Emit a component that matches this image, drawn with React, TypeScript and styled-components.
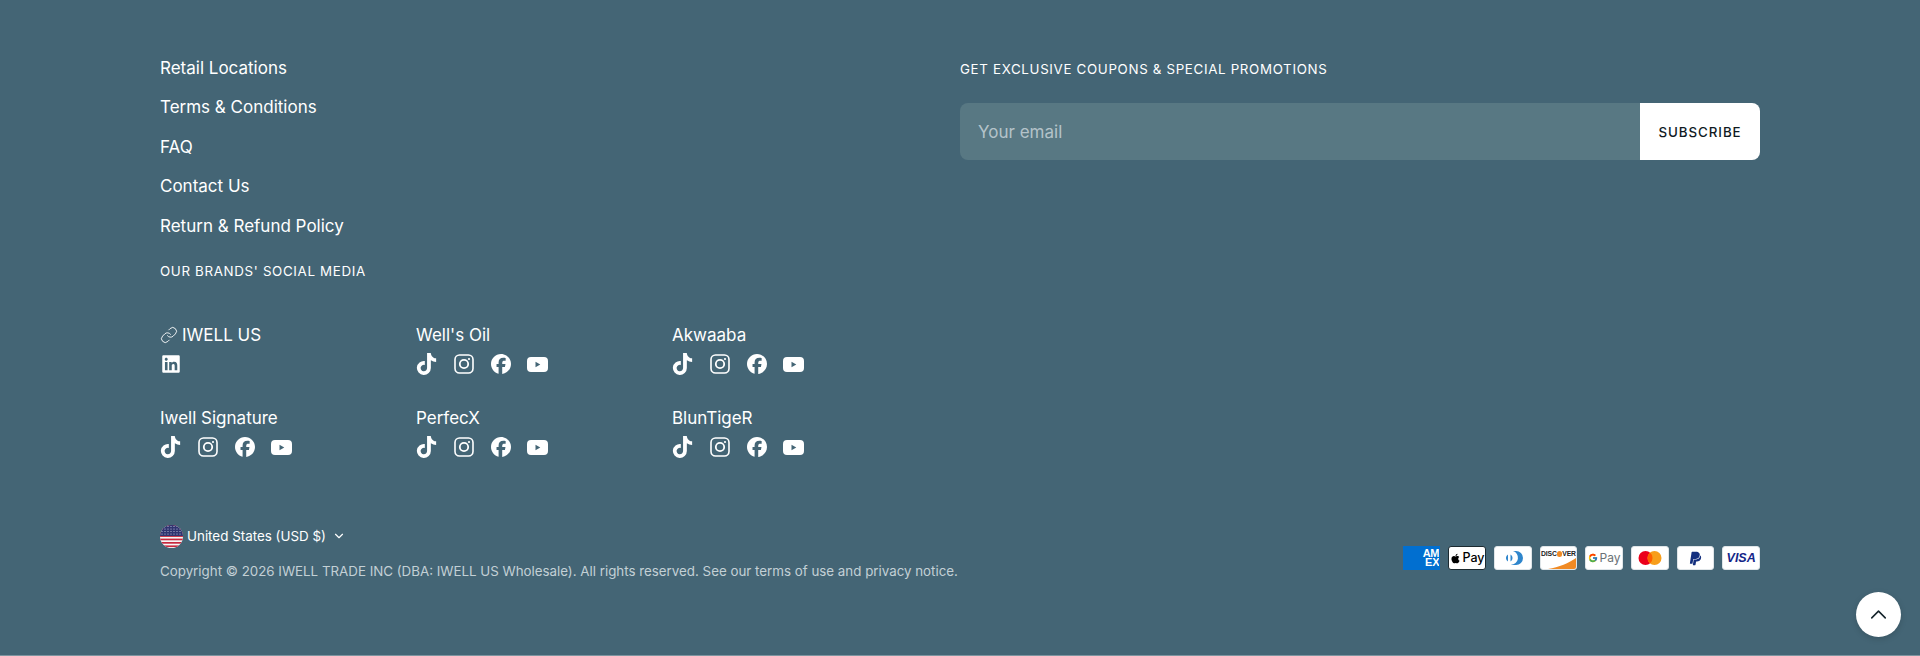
import styled, { createGlobalStyle } from 'styled-components';
import { FaApple, FaFacebook, FaLinkedin, FaPaypal, FaTiktok } from 'react-icons/fa6';
import { FcGoogle } from 'react-icons/fc';
import { ChevronDown, ChevronUp, Link } from 'lucide-react';

const GlobalStyle = createGlobalStyle`
  html, body { margin: 0; padding: 0; background: #446575; }
  body { font-family: Inter, "Liberation Sans", sans-serif; }
  * { box-sizing: border-box; }
`;

const Footer = styled.footer`
  position: relative;
  height: 656px;
  padding: 54px 160px 0;
  background: #446575;
  color: #fff;
  border-bottom: 1px solid #7d95a0;
  overflow: hidden;
`;

const Top = styled.div`
  display: grid;
  grid-template-columns: 800px 800px;
`;

const LinkList = styled.ul`
  list-style: none;
  margin: 0;
  padding: 0;
  display: flex;
  flex-direction: column;
  gap: 11px;
`;

const NavLink = styled.a`
  display: block;
  font-size: 17px;
  line-height: 28.4px;
  color: #fff;
  text-decoration: none;
`;

const Heading = styled.h3`
  margin: 0;
  font-size: 13.33px;
  line-height: 20px;
  font-weight: 400;
  letter-spacing: 0.667px;
  text-transform: uppercase;
  color: #fff;
`;

const SocialHeading = styled(Heading)`
  margin-top: 21px;
`;

const BrandGrid = styled.div`
  display: grid;
  grid-template-columns: repeat(3, 256px);
  row-gap: 29px;
  margin-top: 40px;
`;

const Brand = styled.div`
  display: flex;
  flex-direction: column;
  gap: 4px;
`;

const BrandName = styled.div`
  display: flex;
  align-items: center;
  gap: 4px;
  font-size: 17px;
  line-height: 28px;
`;

const IconRow = styled.div`
  display: flex;
  align-items: center;
  gap: 16px;
  height: 22px;
`;

const IconSlot = styled.span<{ $size?: number }>`
  display: flex;
  align-items: center;
  justify-content: center;
  width: 21px;
  height: 22px;
  font-size: ${props => props.$size || 20}px;
`;

const Newsletter = styled.div`
  display: flex;
  flex-direction: column;
  gap: 24px;
  padding-top: 5px;
`;

const Form = styled.form`
  display: flex;
  height: 57px;
  border-radius: 8px;
  overflow: hidden;
`;

const EmailInput = styled.input`
  flex: 1;
  min-width: 0;
  border: 0;
  outline: 0;
  padding: 0 18px;
  background: #587883;
  color: #fff;
  font: 400 17px Inter, "Liberation Sans", sans-serif;

  &::placeholder {
    color: #b4c3c9;
    opacity: 1;
  }
`;

const SubscribeButton = styled.button`
  width: 120px;
  border: 0;
  background: #fff;
  color: #101a1f;
  font: 500 13.33px Inter, "Liberation Sans", sans-serif;
  letter-spacing: 0.95px;
`;

const Bottom = styled.div`
  display: flex;
  justify-content: space-between;
  align-items: flex-end;
  margin-top: 66px;
`;

const Legal = styled.div`
  display: flex;
  flex-direction: column;
  gap: 13px;
`;

const Country = styled.div`
  display: flex;
  align-items: center;
  gap: 4px;
  font-size: 13.4px;
  line-height: 24px;
`;

const CountryChevron = styled(ChevronDown)`
  margin-left: 2px;
`;

const Copyright = styled.p`
  margin: 0;
  font-size: 13.33px;
  line-height: 20px;
  color: #c3d0d5;
`;

const Payments = styled.div`
  display: flex;
  gap: 8px;
  margin-bottom: 11px;
`;

const PayCard = styled.div<{ $bg?: string; $border?: string }>`
  display: flex;
  align-items: center;
  justify-content: center;
  gap: 2px;
  position: relative;
  width: 37.7px;
  height: 24px;
  overflow: hidden;
  border-radius: 3px;
  background: ${props => props.$bg || '#fff'};
  border: 1px solid ${props => props.$border || '#dfe5e8'};
`;

const AmexCard = styled(PayCard)`
  justify-content: flex-end;
  border-radius: 0;
`;

const AmexText = styled.span`
  width: 19px;
  color: #fff;
  font: 700 11px/9px "Liberation Sans", sans-serif;
  text-align: right;
  letter-spacing: -0.3px;
  white-space: pre-line;
`;

const PayText = styled.span<{ $color?: string; $size?: number; $weight?: number }>`
  color: ${props => props.$color || '#000'};
  font-size: ${props => props.$size || 13}px;
  font-weight: ${props => props.$weight || 500};
  line-height: 1;
  white-space: nowrap;
`;

const DiscoverText = styled.span`
  display: flex;
  align-items: center;
  position: relative;
  top: -4px;
  color: #222;
  font: 700 6.8px/1 "Liberation Sans", sans-serif;
  letter-spacing: -0.1px;
  white-space: nowrap;
`;

const DiscoverDot = styled.i`
  width: 5.5px;
  height: 5.5px;
  border-radius: 50%;
  background: #f08a24;
`;

const VisaText = styled.span`
  color: #142688;
  font: italic 700 12.5px/1 "Liberation Sans", sans-serif;
`;

const CardArt = styled.svg`
  display: block;
`;

const DiscoverSwoosh = styled.svg`
  position: absolute;
  right: 0;
  bottom: 0;
`;

const ScrollTop = styled.button`
  position: absolute;
  right: 19px;
  bottom: 18px;
  display: flex;
  align-items: center;
  justify-content: center;
  width: 45px;
  height: 45px;
  padding: 0;
  border: 0;
  border-radius: 50%;
  background: #fff;
  color: #15242b;
  box-shadow: 0 2px 6px rgba(0, 0, 0, 0.15);
`;

const Instagram = () => (
  <svg width="20" height="20" viewBox="0 0 20 20" fill="none" stroke="currentColor">
    <rect x="1" y="1" width="18" height="18" rx="4.5" strokeWidth="1.6" />
    <circle cx="10" cy="10" r="4.2" strokeWidth="1.8" />
    <circle cx="15" cy="5" r="1.1" fill="currentColor" stroke="none" />
  </svg>
);

const Youtube = () => (
  <svg width="21" height="15" viewBox="0 0 21 15">
    <path
      fillRule="evenodd"
      fill="currentColor"
      d="M4 0h13a4 4 0 0 1 4 4v7a4 4 0 0 1-4 4H4a4 4 0 0 1-4-4V4a4 4 0 0 1 4-4zM8.5 4.7v5.6l4.8-2.8z"
    />
  </svg>
);

const Flag = () => (
  <svg width="23" height="23" viewBox="0 0 23 23">
    <defs>
      <clipPath id="flag-circle">
        <circle cx="11.5" cy="11.5" r="11.5" />
      </clipPath>
    </defs>
    <g clipPath="url(#flag-circle)">
      <rect width="23" height="23" fill="#f6f6f6" />
      {[0, 3.4, 6.8, 10.2, 13.6, 17, 20.4].map(y => (
        <rect key={y} y={y} width="23" height="1.7" fill="#c8283e" />
      ))}
      <rect width="23" height="11" fill="#2f3470" />
      {[1.5, 4, 6.5, 9].map(y =>
        [2, 5, 8, 11, 14, 17, 20].map(x => (
          <circle key={`${x}-${y}`} cx={x} cy={y} r="0.55" fill="#cfd2e6" />
        )),
      )}
    </g>
  </svg>
);

const brands = [
  { name: 'IWELL US', linked: true, linkedinOnly: true },
  { name: "Well's Oil" },
  { name: 'Akwaaba' },
  { name: 'Iwell Signature' },
  { name: 'PerfecX' },
  { name: 'BlunTigeR' },
];

const links = ['Retail Locations', 'Terms & Conditions', 'FAQ', 'Contact Us', 'Return & Refund Policy'];

export default function App() {
  return (
    <>
      <GlobalStyle />
      <Footer>
        <Top>
          <div>
            <LinkList>
              {links.map(label => (
                <li key={label}>
                  <NavLink href="#">{label}</NavLink>
                </li>
              ))}
            </LinkList>
            <SocialHeading>Our brands' social media</SocialHeading>
            <BrandGrid>
              {brands.map(brand => (
                <Brand key={brand.name}>
                  <BrandName>
                    {brand.linked && <Link size={18} strokeWidth={1.2} />}
                    {brand.name}
                  </BrandName>
                  <IconRow>
                    {brand.linkedinOnly ? (
                      <IconSlot><FaLinkedin /></IconSlot>
                    ) : (
                      <>
                        <IconSlot $size={22}><FaTiktok /></IconSlot>
                        <IconSlot><Instagram /></IconSlot>
                        <IconSlot><FaFacebook /></IconSlot>
                        <IconSlot><Youtube /></IconSlot>
                      </>
                    )}
                  </IconRow>
                </Brand>
              ))}
            </BrandGrid>
          </div>
          <Newsletter>
            <Heading>Get exclusive coupons &amp; special promotions</Heading>
            <Form onSubmit={e => e.preventDefault()}>
              <EmailInput placeholder="Your email" />
              <SubscribeButton type="submit">SUBSCRIBE</SubscribeButton>
            </Form>
          </Newsletter>
        </Top>
        <Bottom>
          <Legal>
            <Country>
              <Flag />
              United States (USD $)
              <CountryChevron size={14} strokeWidth={2} />
            </Country>
            <Copyright>
              Copyright © 2026 IWELL TRADE INC (DBA: IWELL US Wholesale). All rights reserved. See our terms of use and privacy notice.
            </Copyright>
          </Legal>
          <Payments>
            <AmexCard $bg="#016fd0" $border="#016fd0">
              <AmexText>{'AM\nEX'}</AmexText>
            </AmexCard>
            <PayCard $border="#1c2a30">
              <FaApple size={11} color="#000" />
              <PayText $size={12.5}>Pay</PayText>
            </PayCard>
            <PayCard>
              <CardArt width="24" height="16" viewBox="0 0 24 16">
                <path d="M12 1h3a7 7 0 0 1 0 14h-3a7 7 0 0 1-2-.3A7 7 0 0 0 12 1z" fill="#2f86cc" />
                <path d="M7 4.5a4 4 0 0 0 0 7zM9.5 4.5a4 4 0 0 1 0 7z" fill="#2f86cc" />
              </CardArt>
            </PayCard>
            <PayCard>
              <DiscoverText>DISC<DiscoverDot />VER</DiscoverText>
              <DiscoverSwoosh width="28" height="11" viewBox="0 0 28 11">
                <path d="M0 11C11 9 21 5 28 0v11z" fill="#f08a24" />
              </DiscoverSwoosh>
            </PayCard>
            <PayCard>
              <FcGoogle size={10} />
              <PayText $color="#6b7276" $size={12} $weight={400}>Pay</PayText>
            </PayCard>
            <PayCard>
              <CardArt width="24" height="16" viewBox="0 0 24 16">
                <circle cx="7.5" cy="8" r="7" fill="#eb001b" />
                <circle cx="16.5" cy="8" r="7" fill="#f79e1b" />
                <path d="M12 2.6a7 7 0 0 1 0 10.8 7 7 0 0 1 0-10.8z" fill="#ff5f00" />
              </CardArt>
            </PayCard>
            <PayCard>
              <FaPaypal size={15} color="#14307f" />
            </PayCard>
            <PayCard>
              <VisaText>VISA</VisaText>
            </PayCard>
          </Payments>
        </Bottom>
        <ScrollTop aria-label="Back to top">
          <ChevronUp size={27} strokeWidth={1.4} />
        </ScrollTop>
      </Footer>
    </>
  );
}
